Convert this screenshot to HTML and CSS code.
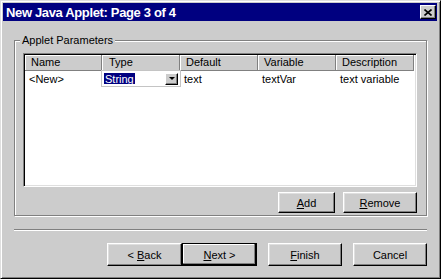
FILE: index.html
```html
<!DOCTYPE html>
<html lang="en">
<head>
  <meta charset="UTF-8" />
  <title>New Java Applet</title>
  <link rel="stylesheet" href="styles.css">
</head>
<body>
  <div class="window">
    <div class="titlebar">
      <span class="title">New Java Applet: Page 3 of 4</span>
      <button class="close" aria-label="Close">
        <svg width="8" height="7" viewBox="0 0 8 7"><path d="M0.5 0.5L7.5 6.5M7.5 0.5L0.5 6.5" stroke="#000" stroke-width="1.6" fill="none"/></svg>
      </button>
    </div>
    <div class="content">
      <div class="group">
        <div class="legend">Applet Parameters</div>
        <div class="list">
          <div class="row head">
            <div class="cell">Name</div>
            <div class="cell type">Type</div>
            <div class="cell">Default</div>
            <div class="cell">Variable</div>
            <div class="cell last">Description</div>
          </div>
          <div class="row data">
            <div class="cell">&lt;New&gt;</div>
            <div class="cell type">
              <div class="combo">
                <span class="sel">String</span>
                <span class="drop"><span class="arrow"></span></span>
              </div>
            </div>
            <div class="cell">text</div>
            <div class="cell">textVar</div>
            <div class="cell last">text variable</div>
          </div>
        </div>
        <div class="group-buttons">
          <button class="btn btn-add"><u>A</u>dd</button>
          <button class="btn btn-remove"><u>R</u>emove</button>
        </div>
      </div>
      <div class="separator"></div>
      <div class="nav">
        <button class="btn btn-back">&lt; <u>B</u>ack</button>
        <button class="btn btn-next btn-default"><u>N</u>ext &gt;</button>
        <button class="btn btn-finish"><u>F</u>inish</button>
        <button class="btn btn-cancel">Cancel</button>
      </div>
    </div>
  </div>
</body>
</html>
```

FILE: styles.css
```css
* {
  box-sizing: border-box;
}
body {
  margin: 0;
  font-family: "Liberation Sans", Arial, sans-serif;
  font-size: 11px;
  color: #000;
}
.window {
  width: 441px;
  height: 279px;
  background: #cccccc;
  border: 1px solid;
  border-color: #dfdfdf #000 #000 #dfdfdf;
  box-shadow: inset 1px 1px #fff, inset -1px -1px #808080;
  padding: 2px 3px 2px 2px;
}
.titlebar {
  height: 18px;
  background: #000080;
  color: #fff;
  display: flex;
  align-items: center;
  justify-content: space-between;
  padding: 0 1px 0 3px;
}
.title {
  font-weight: bold;
  font-size: 13px;
  letter-spacing: -0.35px;
}
.close {
  width: 16px;
  height: 14px;
  padding: 0;
  background: #cccccc;
  border: 1px solid;
  border-color: #fff #000 #000 #fff;
  box-shadow: inset -1px -1px #808080;
  display: flex;
  align-items: center;
  justify-content: center;
}
.close svg {
  display: block;
}
.content {
  padding: 19px 0 0 11px;
}
.group {
  width: 413px;
  border: 1px solid #808080;
  box-shadow: inset 1px 1px #fff, 1px 1px #fff;
  display: flex;
  flex-direction: column;
  padding: 0 9px 2px 8px;
}
.legend {
  align-self: flex-start;
  margin: -7px 0 0 -3px;
  padding: 0 2px;
  line-height: 13px;
  background: #cccccc;
}
.list {
  margin-top: 6px;
  height: 134px;
  background: #fff;
  border: 1px solid;
  border-color: #808080 #fff #fff #808080;
  box-shadow: inset 1px 1px #000, inset -1px -1px #dfdfdf;
  padding: 1px;
}
.row {
  display: flex;
}
.cell {
  width: 78px;
  white-space: nowrap;
}
.cell:first-child {
  width: 77px;
}
.head .cell {
  height: 16px;
  line-height: 15px;
  padding-left: 6px;
  background: #cccccc;
  border-right: 1px solid #808080;
  border-bottom: 1px solid #808080;
  box-shadow: inset 1px 1px #fff;
}
.head .type {
  padding-left: 7px;
}
.data .cell {
  height: 17px;
  line-height: 17px;
  padding-left: 4px;
}
.data .type {
  padding-left: 0;
}
.combo {
  width: 80px;
  height: 17px;
  margin: -1px 0 0 -1px;
  border: 1px solid #c4c4c4;
  background: #fff;
  display: flex;
  align-items: center;
  padding-left: 2px;
}
.sel {
  height: 11px;
  line-height: 12px;
  overflow: hidden;
  background: #000080;
  color: #fff;
  padding: 0 1px;
}
.drop {
  margin-left: auto;
  margin-right: 2px;
  width: 13px;
  height: 12px;
  background: #cccccc;
  border: 1px solid;
  border-color: #fff #000 #000 #fff;
  box-shadow: inset -1px -1px #808080;
  display: flex;
  align-items: center;
  justify-content: center;
}
.arrow {
  width: 0;
  height: 0;
  border-left: 3px solid transparent;
  border-right: 3px solid transparent;
  border-top: 3px solid #000;
}
.group-buttons {
  display: flex;
  justify-content: flex-end;
  gap: 8px;
  margin-top: 5px;
}
.btn {
  height: 23px;
  padding: 0;
  font: inherit;
  color: #000;
  background: #cccccc;
  border: 1px solid;
  border-color: #fff #000 #000 #fff;
  box-shadow: inset -1px -1px #808080, inset 1px 1px #dfdfdf;
}
.group-buttons .btn {
  height: 21px;
}
.btn-add {
  width: 57px;
}
.btn-remove {
  width: 74px;
}
.btn-default {
  border-color: #000;
  box-shadow: inset -1px -1px #000, inset -2px -2px #808080, inset 1px 1px #fff;
}
.separator {
  width: 413px;
  margin-top: 13px;
  border-top: 1px solid #808080;
  border-bottom: 1px solid #fff;
}
.nav {
  width: 413px;
  margin-top: 12px;
  display: flex;
  justify-content: flex-end;
}
.btn-back,
.btn-next {
  width: 75px;
}
.btn-finish,
.btn-cancel {
  width: 74px;
  margin-left: 11px;
}
```
